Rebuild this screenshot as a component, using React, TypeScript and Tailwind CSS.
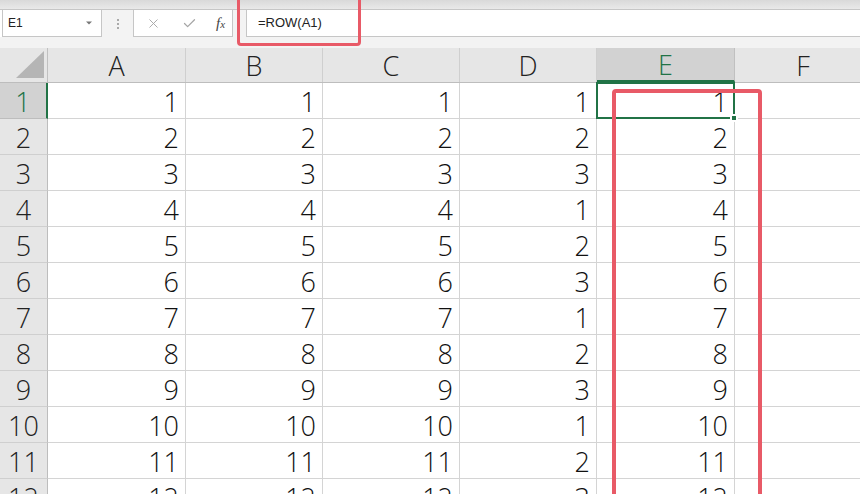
import { X, Check, ChevronDown } from 'lucide-react';

const cols = ['A', 'B', 'C', 'D', 'E', 'F'];
const widths = [138, 137, 137, 137, 138, 137];

function rowData(r: number) {
  const d = ((r - 1) % 3) + 1;
  return [r, r, r, d, r, null];
}

export default function App() {
  const rows = Array.from({ length: 12 }, (_, i) => i + 1);

  return (
    <div
      className="relative w-[860px] h-[494px] overflow-hidden bg-[#f3f3f3] text-[#111]"
      style={{ fontFamily: '"Open Sans", "Noto Sans CJK SC", sans-serif' }}
    >
      {/* ribbon edge */}
      <div className="h-[10px] bg-gradient-to-b from-[#d9d9d9] to-[#e9e9e9] border-b border-[#c6c6c6]" />

      {/* formula bar */}
      <div className="flex h-[27px] items-stretch bg-white">
        <div className="ml-[2px] w-[100px] flex items-center justify-between border border-[#c6c6c6] border-t-0 bg-white pl-[5px] pr-[6px]">
          <span className="text-[12px] text-[#222]" style={{ fontFamily: '"Liberation Sans", sans-serif' }}>E1</span>
          <ChevronDown className="w-3 h-3 text-[#777]" strokeWidth={0} fill="#777" />
        </div>
        <div className="w-[31px] flex flex-col items-center justify-center gap-[2px] bg-[#f3f3f3]">
          <span className="w-[2px] h-[2px] bg-[#aaa]" />
          <span className="w-[2px] h-[2px] bg-[#aaa]" />
          <span className="w-[2px] h-[2px] bg-[#aaa]" />
        </div>
        <div className="w-[100px] flex items-center border border-[#c6c6c6] border-t-0 bg-white pl-[12px]">
          <X className="w-[15px] h-[15px] text-[#a6a6a6]" strokeWidth={1.5} />
          <Check className="ml-[21px] w-[15px] h-[15px] text-[#a6a6a6]" strokeWidth={2} />
          <span
            className="ml-[19px] text-[15px] italic text-[#444]"
            style={{ fontFamily: '"Liberation Serif", serif' }}
          >
            f<span className="text-[11px]">x</span>
          </span>
        </div>
        <div className="w-[13px] bg-[#f3f3f3]" />
        <div className="flex-1 flex items-center border border-[#c6c6c6] border-t-0 border-r-0 bg-white pl-[11px]">
          <span className="text-[13px] text-[#222]" style={{ fontFamily: '"Liberation Sans", sans-serif' }}>
            =ROW(A1)
          </span>
        </div>
      </div>

      <div className="h-[11px] bg-[#f3f3f3]" />

      {/* column headers */}
      <div className="flex h-[35px] bg-[#e6e6e6] border-b border-[#bdbdbd]">
        <div className="shrink-0 w-[48px] flex items-end justify-end pr-[3px] pb-[4px] border-r border-[#c0c0c0]">
          <svg width="28" height="27" viewBox="0 0 28 27">
            <polygon points="28,0 28,27 0,27" fill="#b5b5b5" />
          </svg>
        </div>
        {cols.map((c, i) => (
          <div
            key={c}
            style={{ width: widths[i] }}
            className={
              c === 'E'
                ? 'shrink-0 flex items-center justify-center bg-[#d2d2d2] text-[#217346] border-r border-[#c0c0c0] border-b-2 border-b-[#217346] text-[27px] font-light leading-none'
                : 'shrink-0 flex items-center justify-center text-[#222] border-r border-[#cfcfcf] text-[27px] font-light leading-none'
            }
          >
            {c}
          </div>
        ))}
      </div>

      {/* rows */}
      <div className="bg-white">
        {rows.map((r) => {
          const data = rowData(r);
          return (
            <div key={r} className="flex h-[36px]">
              <div
                className={
                  r === 1
                    ? 'shrink-0 w-[48px] flex items-center justify-center pt-[2px] bg-[#d2d2d2] text-[#217346] border-r-2 border-r-[#217346] border-b border-[#bdbdbd] text-[27px] font-light leading-none'
                    : 'shrink-0 w-[48px] flex items-center justify-center pt-[2px] bg-[#e6e6e6] text-[#222] border-r border-[#bdbdbd] border-b border-b-[#cfcfcf] text-[27px] font-light leading-none'
                }
              >
                {r}
              </div>
              {data.map((v, i) => (
                <div
                  key={i}
                  style={{ width: widths[i] }}
                  className="shrink-0 relative flex items-center justify-end pr-[6px] pt-[2px] border-r border-b border-[#d4d4d4] text-[27px] font-light leading-none"
                >
                  {v}
                  {r === 1 && i === 4 && (
                    <div className="absolute z-10 -left-[1px] -top-[1px] -right-[1px] -bottom-[1px] border-2 border-[#217346]">
                      <div className="absolute -right-[5px] -bottom-[5px] w-[8px] h-[8px] bg-[#217346] border-2 border-white" />
                    </div>
                  )}
                </div>
              ))}
            </div>
          );
        })}
      </div>

      {/* annotations */}
      <div className="absolute z-20 left-[237px] top-[-10px] w-[124px] h-[56px] border-[3px] border-[#e85a67] rounded-[4px]" />
      <div className="absolute z-20 left-[612px] top-[89px] w-[150px] h-[440px] border-[4px] border-[#e85a67] rounded-[4px]" />
    </div>
  );
}
